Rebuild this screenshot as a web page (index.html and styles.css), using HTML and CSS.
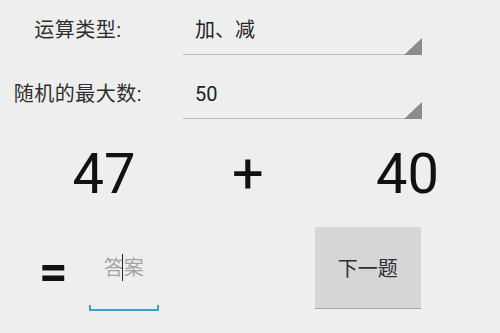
FILE: index.html
```html
<!DOCTYPE html>
<html>
<head>
<meta charset="utf-8">
<link rel="stylesheet" href="styles.css">
</head>
<body>
<div class="screen">
  <div class="form">
    <div class="label">运算类型:</div>
    <div class="spinner">加、减</div>
    <div class="label">随机的最大数:</div>
    <div class="spinner">50</div>
  </div>
  <div class="nums">
    <div class="num">47</div>
    <div class="op">+</div>
    <div class="num num2">40</div>
  </div>
  <div class="answer">
    <div class="eq">=</div>
    <div class="edit">
      <div class="hint">答案<span class="cursor"></span></div>
      <div class="underline"></div>
    </div>
    <div class="btn">下一题</div>
  </div>
</div>
</body>
</html>
```
FILE: styles.css
```css
html, body {
  margin: 0;
  padding: 0;
}
body {
  background: #eeeeee;
  font-family: Roboto, "Noto Sans CJK SC", sans-serif;
  width: 500px;
  height: 333px;
  overflow: hidden;
}
.screen {
  display: flex;
  flex-direction: column;
  height: 333px;
}
.form {
  display: grid;
  grid-template-columns: 156px 239px;
  column-gap: 27px;
  row-gap: 27px;
  padding-top: 18px;
}
.label {
  text-align: center;
  font-size: 20px;
  line-height: 24px;
  color: #2e2e2e;
  letter-spacing: 0.5px;
}
.spinner {
  position: relative;
  font-size: 20px;
  line-height: 24px;
  color: #222;
  padding-left: 12px;
  height: 36px;
  border-bottom: 1px solid #bdbdbd;
}
.spinner::after {
  content: "";
  position: absolute;
  right: 0;
  bottom: -1px;
  width: 18px;
  height: 17px;
  background: #8c8c8c;
  clip-path: polygon(100% 0, 100% 100%, 0 100%);
}
.nums {
  display: grid;
  grid-template-columns: 208px 80px 179px;
  margin-top: 27px;
}
.num, .op {
  font-size: 56px;
  line-height: 56px;
  color: #111;
  text-align: center;
}
.num2 {
  margin-left: 60px;
}
.answer {
  display: flex;
  align-items: flex-start;
  margin-top: 25px;
  height: 82px;
}
.eq {
  margin-left: 39px;
  margin-top: 19px;
  font-size: 50px;
  line-height: 52px;
  font-weight: 700;
  color: #111;
}
.edit {
  margin-left: 21px;
  margin-top: 29px;
  width: 70px;
  display: flex;
  flex-direction: column;
}
.hint {
  position: relative;
  text-align: center;
  font-size: 20px;
  line-height: 24px;
  color: #a3a3a3;
  height: 24px;
}
.cursor {
  position: absolute;
  left: 33px;
  top: -2px;
  width: 1px;
  height: 27px;
  background: #222;
}
.underline {
  margin-top: 25px;
  height: 4px;
  border: 2px solid #3a9fc0;
  border-top: none;
}
.btn {
  margin-left: 156px;
  width: 106px;
  height: 81px;
  background: #d6d6d6;
  border-bottom: 1px solid #a8a8a8;
  display: flex;
  align-items: center;
  justify-content: center;
  font-size: 20px;
  color: #2e2e2e;
}
```
